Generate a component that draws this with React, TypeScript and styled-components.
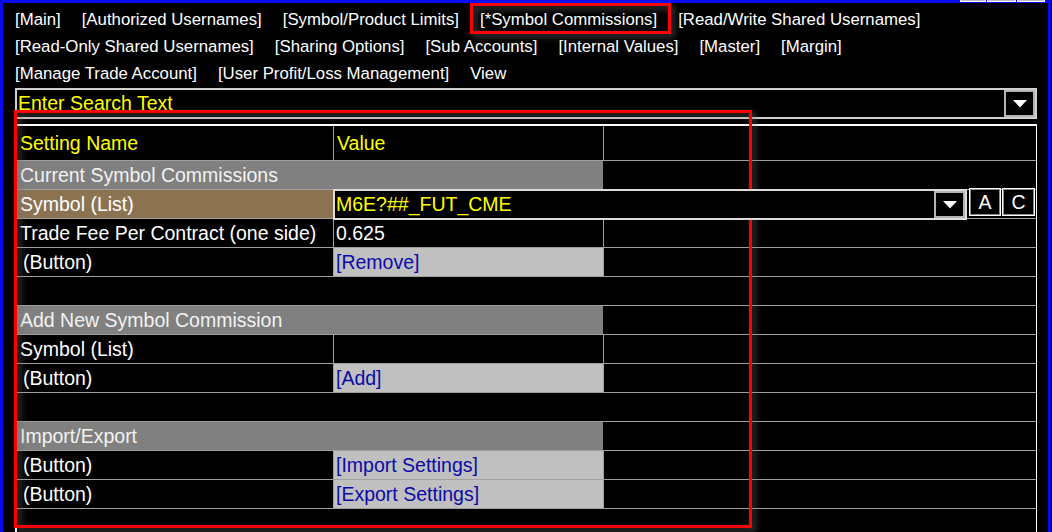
import React from "react";
import styled, { createGlobalStyle } from "styled-components";

const GlobalStyle = createGlobalStyle`
  html, body { margin: 0; padding: 0; background: #000; }
  body { font-family: "Liberation Sans", Arial, sans-serif; }
  * { box-sizing: border-box; }
`;

const BLUE = "#0a0af2";
const LINE = "#a0a0a0";

const Screen = styled.div`
  position: relative;
  width: 1052px;
  height: 532px;
  overflow: hidden;
  background: #000;
`;

const Window = styled.div`
  width: 1051px;
  height: 100%;
  border-left: 3px solid ${BLUE};
  border-right: 3px solid ${BLUE};
  display: flex;
  flex-direction: column;
`;

const TitleBar = styled.div`
  flex: none;
  height: 3px;
  background: ${BLUE};
  display: flex;
  justify-content: flex-end;
  align-items: flex-start;
  gap: 1px;
  padding-right: 3px;
`;

const TitleButton = styled.div<{ $w: number }>`
  width: ${(p) => p.$w}px;
  height: 2px;
  background: #c0c0c0;
  border: 1px solid #fff;
  border-top: none;
`;

const Content = styled.div`
  flex: 1;
  min-height: 0;
  padding: 3px 11px 0 12px;
  display: flex;
  flex-direction: column;
`;

const Nav = styled.nav`
  display: flex;
  flex-direction: column;
  flex: none;
`;

const NavRow = styled.div`
  display: flex;
  gap: 21px;
  height: 27px;
  align-items: center;
  font-size: 16.8px;
  line-height: 27px;
  color: #fff;
  white-space: nowrap;
`;

const NavLink = styled.span``;

const SearchBox = styled.div`
  flex: none;
  margin-top: 1px;
  height: 31px;
  border: 2px solid #d0d0d0;
  display: flex;
  background: #000;
`;

const SearchText = styled.div`
  flex: 1;
  padding-left: 1px;
  color: #ffff00;
  font-size: 19.5px;
  line-height: 26px;
`;

const DropButton = styled.div`
  flex: none;
  width: 31px;
  height: 100%;
  border: 2px solid #b4b4b4;
  background: #000;
  display: flex;
  align-items: center;
  justify-content: center;
`;

const Table = styled.div`
  flex: 1;
  margin-top: 5px;
  border-top: 2px solid #fff;
  border-left: 2px solid #fff;
  border-right: 1px solid #fff;
  font-size: 19.5px;
  color: #fff;
`;

const Row = styled.div<{ $h?: number }>`
  display: grid;
  grid-template-columns: 317px 270px 1fr;
  height: ${(p) => p.$h ?? 29}px;
  border-bottom: 1px solid ${LINE};
`;

const SectionRow = styled.div`
  display: grid;
  grid-template-columns: 586px 1fr;
  height: 29px;
  border-bottom: 1px solid ${LINE};
`;

const EmptyRow = styled.div`
  height: 29px;
  border-bottom: 1px solid ${LINE};
`;

const Cell = styled.div<{
  $bg?: string;
  $color?: string;
  $divider?: boolean;
  $indent?: number;
}>`
  display: flex;
  align-items: center;
  overflow: hidden;
  white-space: nowrap;
  background: ${(p) => p.$bg ?? "transparent"};
  color: ${(p) => p.$color ?? "#fff"};
  border-right: ${(p) => (p.$divider ? `1px solid ${LINE}` : "none")};
  padding-left: ${(p) => p.$indent ?? 3}px;
`;

const SymbolRow = styled.div`
  display: flex;
  height: 29px;
  border-bottom: 1px solid ${LINE};
`;

const BrownCell = styled(Cell)`
  flex: none;
  width: 316px;
`;

const Combo = styled.div`
  position: relative;
  z-index: 1;
  flex: none;
  width: 634px;
  height: 31px;
  margin-top: -1px;
  border: 2px solid #dcdcdc;
  background: #000;
  display: flex;
`;

const ComboText = styled.div`
  flex: 1;
  padding-left: 1px;
  color: #ffff00;
  display: flex;
  align-items: center;
`;

const SmallButton = styled.div<{ $w: number; $gap: number }>`
  flex: none;
  width: ${(p) => p.$w}px;
  height: 28px;
  margin-top: -2px;
  margin-left: ${(p) => p.$gap}px;
  border: 1px solid #fff;
  box-shadow: inset 0 0 0 1px #8c8c8c;
  background: #000;
  color: #fff;
  display: flex;
  align-items: center;
  justify-content: center;
`;

const Callout = styled.div<{ $x: number; $y: number; $w: number; $h: number }>`
  position: absolute;
  left: ${(p) => p.$x}px;
  top: ${(p) => p.$y}px;
  width: ${(p) => p.$w}px;
  height: ${(p) => p.$h}px;
  border: 3px solid #ff0000;
  filter: drop-shadow(3px 3px 3px rgba(110, 110, 110, 0.75));
  pointer-events: none;
`;

const DownArrow = () => (
  <svg width="14" height="8" viewBox="0 0 14 8">
    <polygon points="0,0 14,0 7,7.5" fill="#fff" />
  </svg>
);

const SECTION_GREY = "#808080";
const BUTTON_GREY = "#c0c0c0";
const LINK_BLUE = "#0a0aa8";
const BROWN = "#8b7352";

const navRows = [
  [
    "[Main]",
    "[Authorized Usernames]",
    "[Symbol/Product Limits]",
    "[*Symbol Commissions]",
    "[Read/Write Shared Usernames]",
  ],
  [
    "[Read-Only Shared Usernames]",
    "[Sharing Options]",
    "[Sub Accounts]",
    "[Internal Values]",
    "[Master]",
    "[Margin]",
  ],
  ["[Manage Trade Account]", "[User Profit/Loss Management]", "View"],
];

const ButtonRow = ({ label }: { label: string }) => (
  <Row>
    <Cell $divider $indent={6}>
      (Button)
    </Cell>
    <Cell $divider $bg={BUTTON_GREY} $color={LINK_BLUE} $indent={2}>
      {label}
    </Cell>
    <Cell />
  </Row>
);

const Section = ({ title }: { title: string }) => (
  <SectionRow>
    <Cell $bg={SECTION_GREY} $color="#f2f2f2">
      {title}
    </Cell>
    <Cell />
  </SectionRow>
);

export default function App() {
  return (
    <>
      <GlobalStyle />
      <Screen>
        <Window>
          <TitleBar>
            <TitleButton $w={26} />
            <TitleButton $w={29} />
            <TitleButton $w={28} />
          </TitleBar>
          <Content>
            <Nav>
              {navRows.map((row, i) => (
                <NavRow key={i}>
                  {row.map((item) => (
                    <NavLink key={item}>{item}</NavLink>
                  ))}
                </NavRow>
              ))}
            </Nav>
            <SearchBox>
              <SearchText>Enter Search Text</SearchText>
              <DropButton>
                <DownArrow />
              </DropButton>
            </SearchBox>
            <Table>
              <Row $h={35}>
                <Cell $divider $color="#ffff00">
                  Setting Name
                </Cell>
                <Cell $divider $color="#ffff00" $indent={3}>
                  Value
                </Cell>
                <Cell />
              </Row>
              <Section title="Current Symbol Commissions" />
              <SymbolRow>
                <BrownCell $bg={BROWN}>Symbol (List)</BrownCell>
                <Combo>
                  <ComboText>M6E?##_FUT_CME</ComboText>
                  <DropButton>
                    <DownArrow />
                  </DropButton>
                </Combo>
                <SmallButton $w={32} $gap={2}>
                  A
                </SmallButton>
                <SmallButton $w={33} $gap={1}>
                  C
                </SmallButton>
              </SymbolRow>
              <Row>
                <Cell $divider>Trade Fee Per Contract (one side)</Cell>
                <Cell $divider $indent={2}>
                  0.625
                </Cell>
                <Cell />
              </Row>
              <ButtonRow label="[Remove]" />
              <EmptyRow />
              <Section title="Add New Symbol Commission" />
              <Row>
                <Cell $divider>Symbol (List)</Cell>
                <Cell $divider />
                <Cell />
              </Row>
              <ButtonRow label="[Add]" />
              <EmptyRow />
              <Section title="Import/Export" />
              <ButtonRow label="[Import Settings]" />
              <ButtonRow label="[Export Settings]" />
              <EmptyRow />
            </Table>
          </Content>
        </Window>
        <Callout $x={470} $y={3} $w={201} $h={31} />
        <Callout $x={14} $y={110} $w={738} $h={418} />
      </Screen>
    </>
  );
}
